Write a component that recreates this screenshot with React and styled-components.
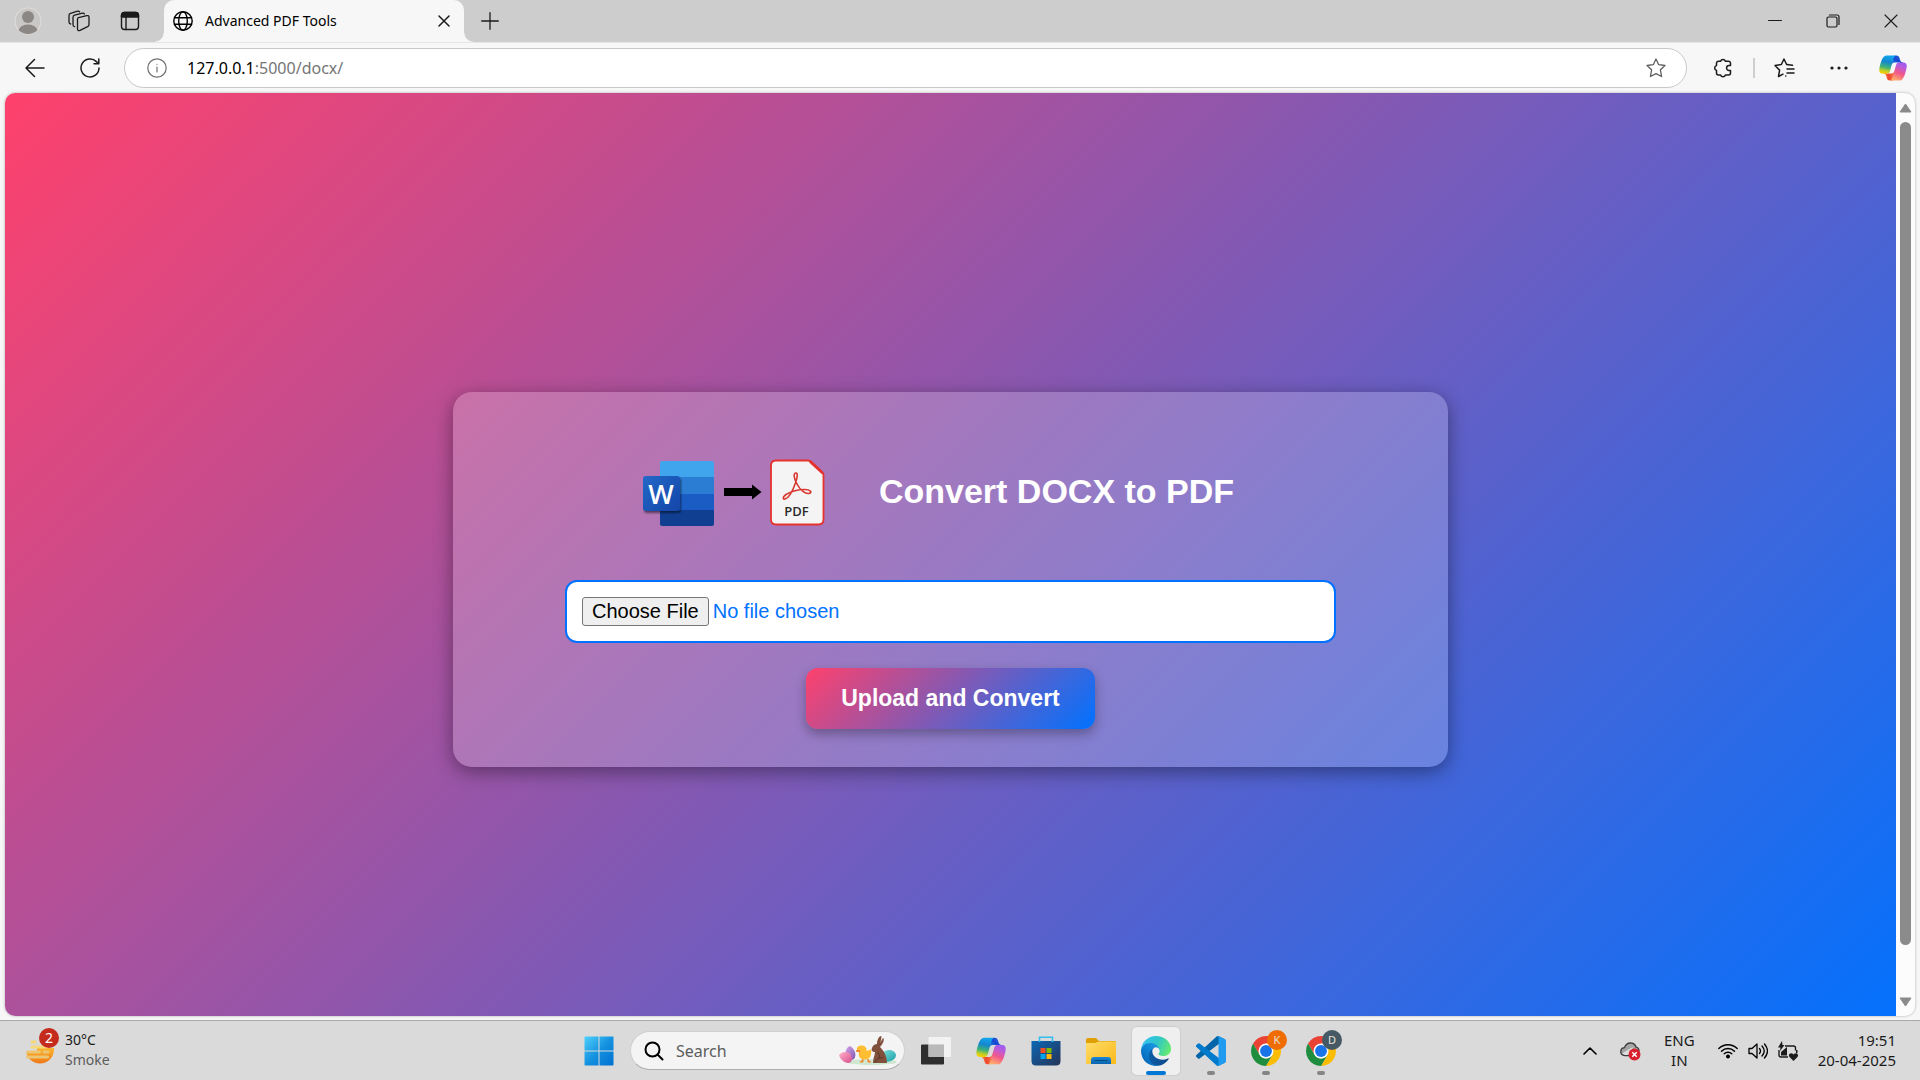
import React from "react";
import styled, { createGlobalStyle } from "styled-components";

const UI_FONT = '"Noto Sans", "Open Sans", sans-serif';
const PAGE_FONT = '"Liberation Sans", Arial, sans-serif';
const BRAND_GRADIENT = "linear-gradient(135deg, #ff416c, #0072ff)";

const GlobalStyle = createGlobalStyle`
  *, *::before, *::after { box-sizing: border-box; }
  body { margin: 0; font-family: ${UI_FONT}; background: #f7f7f7; overflow: hidden; }
  button { font: inherit; color: inherit; }
  svg { display: block; flex: none; }
`;

const Desktop = styled.div`
  display: flex;
  flex-direction: column;
  height: 100vh;
`;

/* ---------- browser window ---------- */

const TabStrip = styled.header`
  display: flex;
  flex: none;
  height: 42px;
  background: #cdcdcd;
`;

const TabStripTools = styled.div`
  display: flex;
  align-items: center;
  gap: 23px;
  width: 164px;
  padding: 0 0 0 14px;
`;

const IconButton = styled.button`
  display: flex;
  align-items: center;
  justify-content: center;
  flex: none;
  width: ${(p) => p.$size || 28}px;
  height: ${(p) => p.$size || 28}px;
  padding: 0;
  border: 0;
  background: none;
  color: ${(p) => p.$color || "#1b1b1b"};
`;

const Tab = styled.div`
  position: relative;
  display: flex;
  align-items: center;
  width: 300px;
  padding: 0 6px 0 9px;
  border-radius: 10px 10px 0 0;
  background: #f7f7f7;

  &::before,
  &::after {
    content: "";
    position: absolute;
    bottom: 0;
    width: 9px;
    height: 9px;
  }
  &::before {
    right: 100%;
    background: radial-gradient(circle at 0 0, #cdcdcd 8px, #f7f7f7 9px);
  }
  &::after {
    left: 100%;
    background: radial-gradient(circle at 100% 0, #cdcdcd 8px, #f7f7f7 9px);
  }
`;

const TabTitle = styled.span`
  flex: 1;
  margin-left: 12px;
  font-size: 14px;
  line-height: 20px;
  color: #000;
`;

const NewTab = styled.div`
  display: flex;
  flex: 1;
  align-items: center;
  padding-left: 12px;
`;

const WindowButtons = styled.div`
  display: flex;
  align-items: center;
  gap: 30px;
  padding-right: 15px;
`;

const Toolbar = styled.div`
  display: flex;
  flex: none;
  align-items: center;
  height: 51px;
  padding: 0 13px 0 21px;
  border-top: 1px solid #e6e6e6;
  background: #f7f7f7;
`;

const NavButtons = styled.nav`
  display: flex;
  gap: 27px;
  margin-right: 20px;
`;

const AddressBar = styled.div`
  display: flex;
  flex: 1;
  align-items: center;
  height: 40px;
  padding: 0 16px 0 20px;
  border: 1px solid #c9c9c9;
  border-radius: 20px;
  background: #fff;
`;

const Url = styled.span`
  flex: 1;
  margin-left: 18px;
  font-size: 16px;
  line-height: 24px;
  color: #767676;

  b {
    font-weight: 400;
    color: #000;
  }
`;

const ToolbarActions = styled.div`
  display: flex;
  align-items: center;
  margin-left: 22px;
`;

const Divider = styled.span`
  width: 2px;
  height: 20px;
  margin: 0 16px;
  background: #cfcfcf;
`;

const MenuGroup = styled.div`
  display: flex;
  align-items: center;
  gap: 26px;
`;

const Viewport = styled.div`
  display: flex;
  flex: 1;
  min-height: 0;
  margin: 0 5px 4px;
  overflow: hidden;
  border-radius: 10px;
  background: #fcfcfc;
  box-shadow: 0 0 3px rgba(0, 0, 0, 0.3);
`;

const PageScroller = styled.div`
  flex: 1;
  overflow: hidden;
`;

const ScrollTrack = styled.div`
  display: flex;
  flex-direction: column;
  align-items: center;
  width: 19px;
  padding: 10px 0 9px;
  gap: 9px;
`;

const ScrollLane = styled.div`
  flex: 1;
  width: 11px;
`;

const ScrollThumb = styled.div`
  height: 95%;
  border-radius: 6px;
  background: #8b8b8b;
`;

/* ---------- converter page ---------- */

const Page = styled.main`
  display: flex;
  align-items: center;
  justify-content: center;
  min-height: calc(100% + 49px);
  background: ${BRAND_GRADIENT};
  font-family: ${PAGE_FONT};
`;

const Card = styled.form`
  display: flex;
  flex-direction: column;
  align-items: center;
  width: 90%;
  max-width: 995px;
  padding: 38px;
  border-radius: 19px;
  background: rgba(255, 255, 255, 0.2);
  box-shadow: 0 5px 19px rgba(0, 0, 0, 0.4);
`;

const CardHeader = styled.div`
  display: flex;
  align-items: center;
  gap: 30px;
  min-height: 124px;
  margin-bottom: 26px;
`;

const Title = styled.h1`
  margin: 0;
  padding: 0 24px 2px;
  font-size: 34px;
  line-height: 40px;
  color: #fff;
`;

const FileInput = styled.input`
  width: 100%;
  max-width: 771px;
  margin-bottom: 25px;
  padding: 15px;
  border: 2px solid #0072ff;
  border-radius: 12px;
  background: #fff;
  font-family: ${PAGE_FONT};
  font-size: 20px;
  color: #0072ff;

  &::file-selector-button {
    height: 29px;
    margin-right: 4px;
    padding: 1px 9px;
    border: 1px solid #767676;
    border-radius: 3px;
    background: #efefef;
    font: inherit;
    color: #000;
  }
`;

const SubmitButton = styled.button`
  padding: 18px 35px;
  border: 0;
  border-radius: 12px;
  background: ${BRAND_GRADIENT};
  box-shadow: 0 5px 12px rgba(0, 0, 0, 0.3);
  font-family: ${PAGE_FONT};
  font-size: 23px;
  font-weight: 700;
  line-height: 25px;
  color: #fff;
`;

/* ---------- taskbar ---------- */

const Taskbar = styled.footer`
  display: grid;
  grid-template-columns: 1fr auto 1fr;
  flex: none;
  align-items: center;
  height: 60px;
  border-top: 1px solid #a9a9a9;
  background: #dadada;
`;

const Weather = styled.div`
  display: flex;
  align-items: center;
  gap: 6px;
  padding-left: 24px;
`;

const Lines = styled.div`
  display: flex;
  flex-direction: column;
  padding-bottom: 2px;
  text-align: ${(p) => p.$align || "left"};
  font-size: ${(p) => (p.$align ? 15 : 14)}px;
  line-height: 20px;
  color: #1b1b1b;
`;

const Muted = styled.span`
  color: #5c5c5c;
`;

const Dock = styled.div`
  display: flex;
  align-items: center;
  gap: 7px;
`;

const DockButton = styled.button`
  position: relative;
  display: flex;
  align-items: center;
  justify-content: center;
  width: 48px;
  height: 48px;
  padding: 0;
  border: 0;
  border-radius: 5px;
  background: ${(p) => (p.$active ? "#efefef" : "none")};
  box-shadow: ${(p) => (p.$active ? "0 0 1px 1px rgba(0, 0, 0, 0.06)" : "none")};

  &::after {
    content: "";
    position: absolute;
    bottom: 0;
    width: ${(p) => (p.$active ? 20 : p.$running ? 8 : 0)}px;
    height: 4px;
    border-radius: 2px;
    background: ${(p) => (p.$active ? "#0078d4" : "#858585")};
  }
`;

const ProfileBadge = styled.span`
  position: absolute;
  top: 3px;
  right: 3px;
  width: 20px;
  height: 20px;
  border-radius: 50%;
  background: ${(p) => p.$color};
  font-size: 11px;
  line-height: 20px;
  text-align: center;
  color: #e8e0d8;
`;

const SearchBox = styled.label`
  display: flex;
  align-items: center;
  width: 275px;
  height: 39px;
  padding: 0 6px 0 13px;
  border: 1px solid #cfcfcf;
  border-bottom-color: #adadad;
  border-radius: 20px;
  background: #f4f4f4;

  input {
    flex: 1;
    min-width: 0;
    margin-left: 12px;
    padding: 0;
    border: 0;
    outline: 0;
    background: none;
    font-family: ${UI_FONT};
    font-size: 16px;
  }
  input::placeholder {
    color: #5c5c5c;
    opacity: 1;
  }
`;

const Tray = styled.div`
  display: flex;
  align-items: center;
  justify-content: flex-end;
  gap: 23px;
  padding-right: 24px;
`;

const StatusIcons = styled.div`
  display: flex;
  gap: 10px;
  margin-right: -3px;
`;

/* ---------- icons ---------- */

const Stroke = ({ w = 20, h = w, sw = 1.3, children }) => (
  <svg width={w} height={h} viewBox={`0 0 ${w} ${h}`} fill="none" stroke="currentColor" strokeWidth={sw} strokeLinecap="round" strokeLinejoin="round" aria-hidden="true">
    {children}
  </svg>
);

const ProfileIcon = () => (
  <svg width="28" height="28" viewBox="0 0 28 28" aria-hidden="true">
    <defs><clipPath id="avatar"><circle cx="14" cy="14" r="13" /></clipPath></defs>
    <circle cx="14" cy="14" r="13" fill="#c9c7c5" stroke="#dedcda" strokeWidth="1.2" />
    <g fill="#8b8785" clipPath="url(#avatar)">
      <circle cx="14" cy="10" r="6" />
      <ellipse cx="14" cy="25" rx="10" ry="7.5" />
    </g>
  </svg>
);

const WorkspacesIcon = () => (
  <Stroke w={22}>
    <path d="M10.5 7.7 18.8 5.6Q21 5.2 21 7.3V14.500Q21 16 19.600 16.600L12 20.300Q9.500 21.200 9.500 18.800V9.300Q9.500 8 10.500 7.700Z" />
    <path d="M6.600 16.600Q5 16.500 5 14.700V7.500Q5 5.700 6.600 5.200L14.500 3.100Q16 2.900 16.400 4" />
    <path d="M2.700 14Q1 13.700 1 12V5.400Q1 3.900 2.500 3.400L9.500 1.200Q11 1 11.600 1.900" />
  </Stroke>
);

const VerticalTabsIcon = () => (
  <Stroke w={20} sw={1.4}>
    <rect x="1.500" y="1.500" width="17" height="17" rx="3" />
    <path d="M1.500 6V4.500a3 3 0 0 1 3-3h11a3 3 0 0 1 3 3V6Z" fill="currentColor" />
    <path d="M6 6v12.500" />
  </Stroke>
);

const GlobeIcon = () => (
  <Stroke w={20} sw={1.4}>
    <circle cx="10" cy="10" r="9.200" />
    <ellipse cx="10" cy="10" rx="4.300" ry="9.200" />
    <path d="M1.500 6.700h17M1.500 13.300h17" />
  </Stroke>
);

const InfoIcon = () => (
  <Stroke w={20} sw={1.2}>
    <circle cx="10" cy="10" r="9.200" />
    <path d="M10 9v5" />
    <circle cx="10" cy="6.300" r=".6" fill="currentColor" stroke="none" />
  </Stroke>
);

const StarIcon = () => (
  <Stroke w={20}>
    <path d="m10 1 2.700 5.700 6.300.8-4.600 4.300 1.200 6.700L10 15.600l-5.600 2.900 1.200-6.700L1 7.500l6.300-.8Z" />
  </Stroke>
);

const ExtensionsIcon = () => (
  <Stroke w={20} sw={1.5}>
    <path d="M6 3.200H7.600A2.500 2.500 0 0 1 12.400 3.200H15.500A2 2 0 0 1 17.500 5.200V7.600H16A2.400 2.400 0 0 0 16 12.400H17.500V15A2 2 0 0 1 15.500 17H12.400A2.500 2.500 0 0 1 7.600 17H5.500A2 2 0 0 1 3.500 15V12.400A2.500 2.500 0 0 1 3.500 7.600V5.200A2 2 0 0 1 5.500 3.200Z" />
  </Stroke>
);

const FavoritesIcon = () => (
  <Stroke w={22} h={20} sw={1.5}>
    <path d="M13.700 6.700 12.600 6.500 10 1 7.300 6.500 1 7.500l4.600 4.600-1.100 6.400L9 16.200M13 6.600l5.500.7M13 11h7M13 15h7M11.800 18h-.1" />
  </Stroke>
);

const COPILOT_PATHS = [
  ["cpBlue", "M34.142 7.325A4.630 4.630 0 0 0 29.700 4H28.350a4.630 4.630 0 0 0-4.554 3.794L21.480 20.407l.575-1.965a4.630 4.630 0 0 1 4.444-3.330h7.853l3.294 1.282 3.175-1.283h-.926a4.630 4.630 0 0 1-4.443-3.325l-1.310-4.461Z"],
  ["cpRed", "M14.330 40.656A4.630 4.630 0 0 0 18.779 44h2.870a4.630 4.630 0 0 0 4.629-4.510l.312-12.163-.654 2.233a4.630 4.630 0 0 1-4.443 3.329h-7.919l-2.823-1.532-3.057 1.532h.912a4.630 4.630 0 0 1 4.447 3.344l1.279 4.423Z"],
  ["cpLeft", "M29.500 4H13.460c-4.583 0-7.332 6.057-9.165 12.113C2.123 23.290-.720 32.885 7.503 32.885h6.925a4.630 4.630 0 0 0 4.456-3.358 2077.617 2077.617 0 0 1 4.971-17.156c.843-2.843 1.544-5.284 2.621-6.805C27.080 4.714 28.086 4 29.500 4Z"],
  ["cpRight", "M18.498 44h16.040c4.582 0 7.332-6.058 9.165-12.115 2.171-7.177 5.013-16.775-3.208-16.775h-6.926a4.630 4.630 0 0 0-4.455 3.358 2084.036 2084.036 0 0 1-4.972 17.160c-.842 2.843-1.544 5.285-2.620 6.806-.604.852-1.610 1.566-3.024 1.566Z"],
];

const CopilotIcon = ({ size = 32, id }) => (
  <svg width={size} height={size} viewBox="0 0 48 48" aria-hidden="true">
    <defs>
      <linearGradient id={`${id}cpBlue`} x1="0" x2="1" y1="1" y2="0"><stop stopColor="#1b9be8" /><stop offset=".5" stopColor="#1746d1" /><stop offset="1" stopColor="#2a6be0" /></linearGradient>
      <linearGradient id={`${id}cpRed`} x1="0" x2="1"><stop stopColor="#f9a13a" /><stop offset=".5" stopColor="#ee4630" /><stop offset="1" stopColor="#fb7a4a" /></linearGradient>
      <linearGradient id={`${id}cpLeft`} x1=".5" x2=".3" y1="0" y2="1"><stop stopColor="#0fa6ee" /><stop offset=".35" stopColor="#1586cf" /><stop offset=".65" stopColor="#3fb376" /><stop offset=".85" stopColor="#c4cd27" /><stop offset="1" stopColor="#f5d400" /></linearGradient>
      <linearGradient id={`${id}cpRight`} x1=".8" x2=".4" y1="0" y2="1"><stop stopColor="#9a5cf2" /><stop offset=".25" stopColor="#b95bdb" /><stop offset=".6" stopColor="#f2588b" /><stop offset="1" stopColor="#ffab6b" /></linearGradient>
    </defs>
    {COPILOT_PATHS.map(([fill, d]) => <path key={fill} d={d} fill={`url(#${id}${fill})`} />)}
  </svg>
);

const DocxToPdfArt = () => (
  <svg width="182" height="70" viewBox="0 -2 182 70" role="img" aria-label="Word document to PDF">
    <defs>
      <clipPath id="wordSheet"><rect x="17" y="2" width="54" height="65" rx="2" /></clipPath>
      <linearGradient id="wordTile" x2="1" y2="1"><stop stopColor="#2368c8" /><stop offset="1" stopColor="#1346a8" /></linearGradient>
      <filter id="tileShadow" x="-20%" y="-20%" width="150%" height="150%"><feDropShadow dx="1" dy="2" stdDeviation="1.200" floodOpacity=".5" /></filter>
    </defs>
    <g clipPath="url(#wordSheet)">
      <path fill="#41a5ee" d="M17 2h54v16H17z" />
      <path fill="#2b7cd3" d="M17 18h54v17H17z" />
      <path fill="#1b5cc4" d="M17 35h54v16H17z" />
      <path fill="#103f91" d="M17 51h54v16H17z" />
    </g>
    <rect y="17" width="37" height="35" rx="3" fill="url(#wordTile)" filter="url(#tileShadow)" />
    <text x="18" y="45" textAnchor="middle" fontFamily="Open Sans, sans-serif" fontWeight="600" fontSize="27" fill="#fff">W</text>
    <path d="M81 29h28v-3.500l9.500 7.500-9.500 7.500V37H81Z" fill="#000" />
    <path d="M133 1.500h32q2 0 4 2l9.500 9q2 1.500 2 4v44q0 5-5 5h-42.500q-5 0-5-5V6.500q0-5 5-5Z" fill="#f4f4f4" stroke="#e5322d" strokeWidth="1.800" />
    <path d="M167 2.500 179.500 14" stroke="#e5322d" strokeWidth="2.500" />
    <path d="M153 14c-3 0-2 6 1 11 3 6 8 10 12 9.500 4-1 1-4-4-4-7 0-14 2-19 5-4 3-3 5-1 4.500 4-1 8-9 10.500-16C154.500 18 155 14 153 14Z" fill="none" stroke="#d93831" strokeWidth="1.600" />
    <text x="153.500" y="56.500" textAnchor="middle" fontFamily="Open Sans, sans-serif" fontWeight="600" fontSize="13" fill="#2b2b2b">PDF</text>
  </svg>
);

const WeatherIcon = () => (
  <svg width="35" height="46" viewBox="0 0 35 46" aria-hidden="true">
    <defs>
      <linearGradient id="sun" x2="0" y2="1"><stop stopColor="#fbc02d" /><stop offset=".5" stopColor="#fbb02d" /><stop offset="1" stopColor="#f07818" /></linearGradient>
      <clipPath id="haze"><path d="M13 20h22v18H0V25h13Z" /></clipPath>
    </defs>
    <circle cx="16" cy="21.500" r="14" fill="url(#sun)" clipPath="url(#haze)" />
    <g strokeLinecap="round" strokeWidth="3">
      <path d="M8 14h3M8 19h14" stroke="#f6d878" />
      <path d="M3.500 24h12M20 24h4M3.500 29h20" stroke="#ecc673" />
    </g>
    <circle cx="25" cy="10" r="10" fill="#c42b1c" />
    <text x="25" y="15" textAnchor="middle" fontFamily="Noto Sans, sans-serif" fontSize="14" fill="#fff">2</text>
  </svg>
);

const WindowsIcon = () => (
  <svg width="30" height="30" viewBox="0 0 30 30" aria-hidden="true">
    <defs><linearGradient id="win" x2="1" y2="1"><stop stopColor="#50d0fb" /><stop offset=".5" stopColor="#1592e0" /><stop offset="1" stopColor="#0070d0" /></linearGradient></defs>
    <path fill="url(#win)" d="M1 .5h13.500V14.500H.5V1zM15.500 .5H29l.5.5v13.500h-14zM.5 15.500h14v14H1l-.5-.5zM15.500 15.500h14V29l-.5.500H15.500z" />
  </svg>
);

const EasterArt = () => (
  <svg width="60" height="30" viewBox="0 0 60 30" aria-hidden="true">
    <defs>
      <linearGradient id="egg1" x2="1" y2="1"><stop stopColor="#d9a6e8" /><stop offset="1" stopColor="#7d55b0" /></linearGradient>
      <linearGradient id="egg2" x2="1" y2="1"><stop stopColor="#ffb3cb" /><stop offset="1" stopColor="#d84f8c" /></linearGradient>
      <linearGradient id="egg3" x2="1" y2="1"><stop stopColor="#7fe0df" /><stop offset="1" stopColor="#199fa5" /></linearGradient>
    </defs>
    <ellipse cx="34" cy="26" rx="25" ry="3" fill="#cfe6cf" />
    <path d="M12 10c5 3 7 9 4 13-3 2-9 1-9-3 0-5 2-9 5-10Z" fill="url(#egg1)" />
    <path d="M1 19c3-4 10-4 12 0 2 4 1 8-3 8-4 0-8-4-9-8Z" fill="url(#egg2)" />
    <path d="M44 18c3-6 13-5 14 1 0 6-9 8-13 6Z" fill="url(#egg3)" />
    <path d="M19 14q-1-4 4-4.500c4 0 6 2 5.500 5.500l4.500-1.500c1 5-1 10-6 10-5 0-7-3-6-7Z" fill="#ffbe32" />
    <path d="m18 15 3-1 1 2ZM25 23v3h-3M30 23v3h3" fill="#f3872c" stroke="#f3872c" />
    <path d="M35 27c0-5 2-8 2-11-3 0-4-2-3-4 1-3 3-4 5-4 0-4 2-8 4-8 1 0 0 5-1 7l3-5c2 1 0 6-3 9 3 3 7 8 7 16Z" fill="#80503c" />
    <path d="M37 27c1-4 4-6 8-5M39 16c2 1 3 4 2 6" stroke="#5c3528" fill="none" />
  </svg>
);

const TaskViewIcon = () => (
  <svg width="30" height="28" viewBox="0 0 30 28" aria-hidden="true">
    <rect y="7.500" width="23" height="20" rx="1" fill="#2e2e2e" />
    <rect x="7.500" width="22.500" height="20" rx="1" fill="#f4f4f4" fillOpacity=".92" />
    <path d="M7.500 7.500H23V20H7.500z" fill="#b9b9b9" />
  </svg>
);

const StoreIcon = () => (
  <svg width="30" height="30" viewBox="0 0 30 30" aria-hidden="true">
    <defs><linearGradient id="bag" x2="1" y2="1"><stop stopColor="#0b68b5" /><stop offset="1" stopColor="#263357" /></linearGradient></defs>
    <path d="M.5 5h29v20q0 4.500-4.500 4.500H5Q.5 29.500.5 25Z" fill="url(#bag)" />
    <path d="M8.500 6V1.200h13V6" fill="none" stroke="#32bdf0" strokeWidth="1.600" />
    <path fill="#f25022" d="M9.500 12h5v5h-5z" /><path fill="#7fba00" d="M15.500 12h5v5h-5z" />
    <path fill="#00a4ef" d="M9.500 18h5v5h-5z" /><path fill="#ffb900" d="M15.500 18h5v5h-5z" />
  </svg>
);

const ExplorerIcon = () => (
  <svg width="30" height="28" viewBox="0 0 30 28" aria-hidden="true">
    <defs>
      <linearGradient id="folder" x2="1" y2="1"><stop stopColor="#ffdc6b" /><stop offset="1" stopColor="#f9b919" /></linearGradient>
      <linearGradient id="folderPocket" x2="0" y2="1"><stop stopColor="#1687d8" /><stop offset="1" stopColor="#0b63ad" /></linearGradient>
    </defs>
    <path d="M0 3q0-2 2-2h8l3 3h16q1 0 1 1v8H0Z" fill="#dfa006" />
    <path d="M0 6h9l4-1.500h17V27H0Z" fill="url(#folder)" />
    <path d="M5 27v-4q0-3 3-3h14q3 0 3 3v4Z" fill="url(#folderPocket)" />
    <path d="M8.500 23.500h13" stroke="#084a82" />
  </svg>
);

const EdgeIcon = () => (
  <svg width="30" height="30" viewBox="0 0 256 256" aria-hidden="true">
    <defs>
      <linearGradient id="edgeDark" x1=".1" x2="1" y1=".5" y2=".5"><stop stopColor="#0c59a4" /><stop offset="1" stopColor="#114a8b" /></linearGradient>
      <linearGradient id="edgeBlue" x1="1" x2=".3" y1=".2" y2="1"><stop stopColor="#1b9de2" /><stop offset=".4" stopColor="#1187d8" /><stop offset="1" stopColor="#0667b8" /></linearGradient>
      <linearGradient id="edgeGreen" x1="0" x2="1" y1=".3" y2=".6"><stop stopColor="#35c1f1" /><stop offset=".5" stopColor="#2fc6c9" /><stop offset="1" stopColor="#66eb6e" /></linearGradient>
    </defs>
    <path fill="url(#edgeDark)" d="M231 190.500c-3.400 1.800-6.900 3.400-10.500 4.700a101.500 101.500 0 0 1-35.900 6.400c-47.300 0-88.500-32.500-88.500-74.300a31.500 31.500 0 0 1 16.400-27.300c-42.800 1.800-53.800 46.400-53.800 72.500 0 74 68.100 81.400 82.800 81.400 7.900 0 19.800-2.300 27-4.600l1.300-.4a128.300 128.300 0 0 0 66.600-52.800 4 4 0 0 0-5.400-5.600Z" />
    <path fill="url(#edgeBlue)" d="M105.700 241.400a79.200 79.200 0 0 1-22.700-21.300 80.700 80.700 0 0 1 29.500-120c3.200-1.500 8.500-4.100 15.600-4a32.400 32.400 0 0 1 25.700 13 31.900 31.900 0 0 1 6.300 18.700c0-.2 24.500-79.600-80-79.600-43.900 0-80 41.600-80 78.200a130.200 130.200 0 0 0 12.100 56 128 128 0 0 0 156.400 67 75.500 75.500 0 0 1-62.800-8Z" />
    <path fill="url(#edgeGreen)" d="M152.300 148.900c-.9 1-3.400 2.500-3.400 5.600 0 2.600 1.700 5.200 4.800 7.300 14.400 10.100 41.700 8.700 41.700 8.700 10.700 0 21.200-2.900 30.400-8.300a61.800 61.800 0 0 0 30.400-53.100c.3-22.400-8-37.300-11.300-43.900C223.500 23.900 177.700 0 128 0A128 128 0 0 0 0 126.200c.5-36.500 36.800-66 80-66 3.500 0 23.500.3 42 10a72.600 72.600 0 0 1 30.900 29.300c6.100 10.600 7.200 24.100 7.200 29.500s-2.700 13.300-7.800 19.900Z" />
  </svg>
);

const CodeIcon = () => (
  <svg width="30" height="30" viewBox="0 0 100 100" aria-hidden="true">
    <path fill="#0065a9" d="M96.461 10.796 75.857.876a6.230 6.230 0 0 0-7.107 1.207L1.300 63.583a4.167 4.167 0 0 0 .004 6.162l5.510 5.009a4.167 4.167 0 0 0 5.320.236l81.228-61.620c2.725-2.067 6.639-.124 6.639 3.297v-.240a6.250 6.250 0 0 0-3.539-5.630Z" />
    <path fill="#007acc" d="m96.461 89.204-20.604 9.920a6.229 6.229 0 0 1-7.107-1.207L1.300 36.417a4.167 4.167 0 0 1 .004-6.162l5.510-5.009a4.167 4.167 0 0 1 5.320-.236l81.228 61.620c2.725 2.067 6.639.124 6.639-3.297v.240a6.250 6.250 0 0 1-3.539 5.630Z" />
    <path fill="#1f9cf0" d="M75.858 99.126a6.232 6.232 0 0 1-7.108-1.210c2.306 2.307 6.250.674 6.250-2.588V4.672c0-3.262-3.944-4.895-6.250-2.589a6.232 6.232 0 0 1 7.108-1.210l20.600 9.908A6.250 6.250 0 0 1 100 16.413v67.174a6.250 6.250 0 0 1-3.541 5.633l-20.601 9.906Z" />
  </svg>
);

const ChromeIcon = () => (
  <svg width="30" height="30" viewBox="0 0 48 48" aria-hidden="true">
    <path fill="#ea4335" d="M24 12h20.780A24 24 0 0 0 3.220 12l10.390 18Z" />
    <path fill="#fbbc04" d="M34.390 30 24 48A24 24 0 0 0 44.780 12H24Z" />
    <path fill="#1e8e3e" d="M13.610 30 3.220 12A24 24 0 0 0 24 48l10.390-18A12 12 0 0 1 13.610 30Z" />
    <circle cx="24" cy="24" r="12" fill="#fff" />
    <circle cx="24" cy="24" r="9.500" fill="#1a73e8" />
  </svg>
);

const OneDriveIcon = () => (
  <svg width="21" height="20" viewBox="0 0 21 20" aria-hidden="true">
    <path d="M5 14.500C1.500 14.500.5 12 .8 10c.3-2 2-3.300 3.700-3.400C6 3 9 1.500 12 2.200c2 .5 3.500 2 4 4 2 .3 3 1.800 3 4l-8 4.300Z" fill="#a5a5a5" stroke="#3d3d3d" strokeWidth="1.300" />
    <path d="M2 12.500 13 6l-3 8H5Z" fill="#dedede" />
    <circle cx="14.500" cy="13.500" r="6" fill="#d9202e" />
    <path d="m12.300 11.300 4.400 4.400m0-4.400-4.400 4.400" stroke="#fff" strokeWidth="1.500" />
  </svg>
);

const BatteryIcon = () => (
  <svg width="20" height="20" viewBox="0 0 20 20" aria-hidden="true">
    <path d="M7 5h8.500q2 0 2 2v2.500M1 9v5q0 2 2 2h7" fill="none" stroke="#1b1b1b" strokeWidth="1.400" />
    <path d="M4 0 0 6.500h2.500L2 10l4.500-6H4.500ZM3 14.500V11l6-5v8.500ZM18 9h1.500v3H18Z" fill="#1b1b1b" />
    <path d="m15.500 20-4-4c-2-3 2-5 4-2.500 2-2.500 6-.5 4 2.500Z" fill="#1b1b1b" />
  </svg>
);

/* ---------- sections ---------- */

const BrowserTabs = () => (
  <TabStrip>
    <TabStripTools>
      <IconButton aria-label="Profile"><ProfileIcon /></IconButton>
      <IconButton aria-label="Workspaces"><WorkspacesIcon /></IconButton>
      <IconButton aria-label="Tab actions"><VerticalTabsIcon /></IconButton>
    </TabStripTools>
    <Tab>
      <GlobeIcon />
      <TabTitle>Advanced PDF Tools</TabTitle>
      <IconButton aria-label="Close tab">
        <Stroke w={12} sw={1.500}><path d="m1 1 10 10M11 1 1 11" /></Stroke>
      </IconButton>
    </Tab>
    <NewTab>
      <IconButton aria-label="New tab">
        <Stroke w={18} sw={1.300}><path d="M9 .7v16.600M.7 9h16.600" /></Stroke>
      </IconButton>
    </NewTab>
    <WindowButtons>
      <IconButton aria-label="Minimize"><Stroke w={14} sw={1}><path d="M.5 6.500h13" /></Stroke></IconButton>
      <IconButton aria-label="Restore">
        <Stroke w={14} sw={1.200}><rect x="1" y="3" width="10" height="10" rx="1.500" /><path d="M3.500 1H11q2 0 2 2v7.500" /></Stroke>
      </IconButton>
      <IconButton aria-label="Close"><Stroke w={14} sw={1.100}><path d="m1 1 12 12M13 1 1 13" /></Stroke></IconButton>
    </WindowButtons>
  </TabStrip>
);

const BrowserToolbar = () => (
  <Toolbar>
    <NavButtons>
      <IconButton aria-label="Back"><Stroke w={20} sw={1.500}><path d="M19 10H1.500M9.500 1.500 1 10l8.500 8.500" /></Stroke></IconButton>
      <IconButton aria-label="Refresh"><Stroke w={20} sw={1.500}><path d="M19 10a9 9 0 1 1-2.600-6.400L18.500 5.500M18.800 1v4.800H14" /></Stroke></IconButton>
    </NavButtons>
    <AddressBar>
      <IconButton $size={24} $color="#707070" aria-label="Site information"><InfoIcon /></IconButton>
      <Url><b>127.0.0.1</b>:5000/docx/</Url>
      <IconButton $color="#5f5f5f" aria-label="Favorite this page"><StarIcon /></IconButton>
    </AddressBar>
    <ToolbarActions>
      <IconButton aria-label="Extensions"><ExtensionsIcon /></IconButton>
      <Divider />
      <MenuGroup>
        <IconButton aria-label="Favorites"><FavoritesIcon /></IconButton>
        <IconButton aria-label="More">
          <svg width="18" height="4" viewBox="0 0 18 4" fill="currentColor"><circle cx="2" cy="2" r="1.600" /><circle cx="9" cy="2" r="1.600" /><circle cx="16" cy="2" r="1.600" /></svg>
        </IconButton>
        <IconButton aria-label="Copilot"><CopilotIcon id="bar" size={30} /></IconButton>
      </MenuGroup>
    </ToolbarActions>
  </Toolbar>
);

const ConverterPage = () => (
  <Page>
    <Card onSubmit={(e) => e.preventDefault()}>
      <CardHeader>
        <DocxToPdfArt />
        <Title>Convert DOCX to PDF</Title>
      </CardHeader>
      <FileInput type="file" accept=".docx" aria-label="DOCX file" />
      <SubmitButton type="submit">Upload and Convert</SubmitButton>
    </Card>
  </Page>
);

const WindowsTaskbar = () => (
  <Taskbar>
    <Weather>
      <WeatherIcon />
      <Lines><span>30°C</span><Muted>Smoke</Muted></Lines>
    </Weather>
    <Dock>
      <DockButton aria-label="Start"><WindowsIcon /></DockButton>
      <SearchBox>
        <Stroke w={20} sw={2}><circle cx="8.500" cy="8.500" r="7" /><path d="m13.500 13.500 5 5" /></Stroke>
        <input type="text" placeholder="Search" aria-label="Search" />
        <EasterArt />
      </SearchBox>
      <DockButton aria-label="Task view"><TaskViewIcon /></DockButton>
      <DockButton aria-label="Copilot"><CopilotIcon id="dock" /></DockButton>
      <DockButton aria-label="Microsoft Store"><StoreIcon /></DockButton>
      <DockButton aria-label="File Explorer"><ExplorerIcon /></DockButton>
      <DockButton $active aria-label="Edge"><EdgeIcon /></DockButton>
      <DockButton $running aria-label="Visual Studio Code"><CodeIcon /></DockButton>
      <DockButton $running aria-label="Chrome, K"><ChromeIcon /><ProfileBadge $color="#ef6c00">K</ProfileBadge></DockButton>
      <DockButton $running aria-label="Chrome, D"><ChromeIcon /><ProfileBadge $color="#455a64">D</ProfileBadge></DockButton>
    </Dock>
    <Tray>
      <Stroke w={14} h={8} sw={1.600}><path d="m1 7 6-6 6 6" /></Stroke>
      <OneDriveIcon />
      <Lines $align="center"><span>ENG</span><span>IN</span></Lines>
      <StatusIcons>
        <Stroke w={20} sw={1.400}>
          <path d="M.8 7.500a13 13 0 0 1 18.400 0M3.500 10.200a9.200 9.200 0 0 1 13 0M6.200 12.800a5.400 5.400 0 0 1 7.600 0" />
          <circle cx="10" cy="15.500" r="1.300" fill="currentColor" />
        </Stroke>
        <Stroke w={20} sw={1.300}>
          <path d="M1 7.500h3L9 3v14l-5-4.500H1ZM11.500 7.500q2 2.500 0 5M14 5q4.500 5 0 10M16.500 3q6 7 0 14" />
        </Stroke>
        <BatteryIcon />
      </StatusIcons>
      <Lines $align="right"><span>19:51</span><span>20-04-2025</span></Lines>
    </Tray>
  </Taskbar>
);

export default function App() {
  return (
    <Desktop>
      <GlobalStyle />
      <BrowserTabs />
      <BrowserToolbar />
      <Viewport>
        <PageScroller><ConverterPage /></PageScroller>
        <ScrollTrack>
          <svg width="13" height="10" viewBox="0 0 13 10"><path d="M6.500 1 12 9H1Z" fill="#8b8b8b" stroke="#8b8b8b" strokeLinejoin="round" /></svg>
          <ScrollLane><ScrollThumb /></ScrollLane>
          <svg width="13" height="10" viewBox="0 0 13 10"><path d="M6.500 9 12 1H1Z" fill="#8b8b8b" stroke="#8b8b8b" strokeLinejoin="round" /></svg>
        </ScrollTrack>
      </Viewport>
      <WindowsTaskbar />
    </Desktop>
  );
}
